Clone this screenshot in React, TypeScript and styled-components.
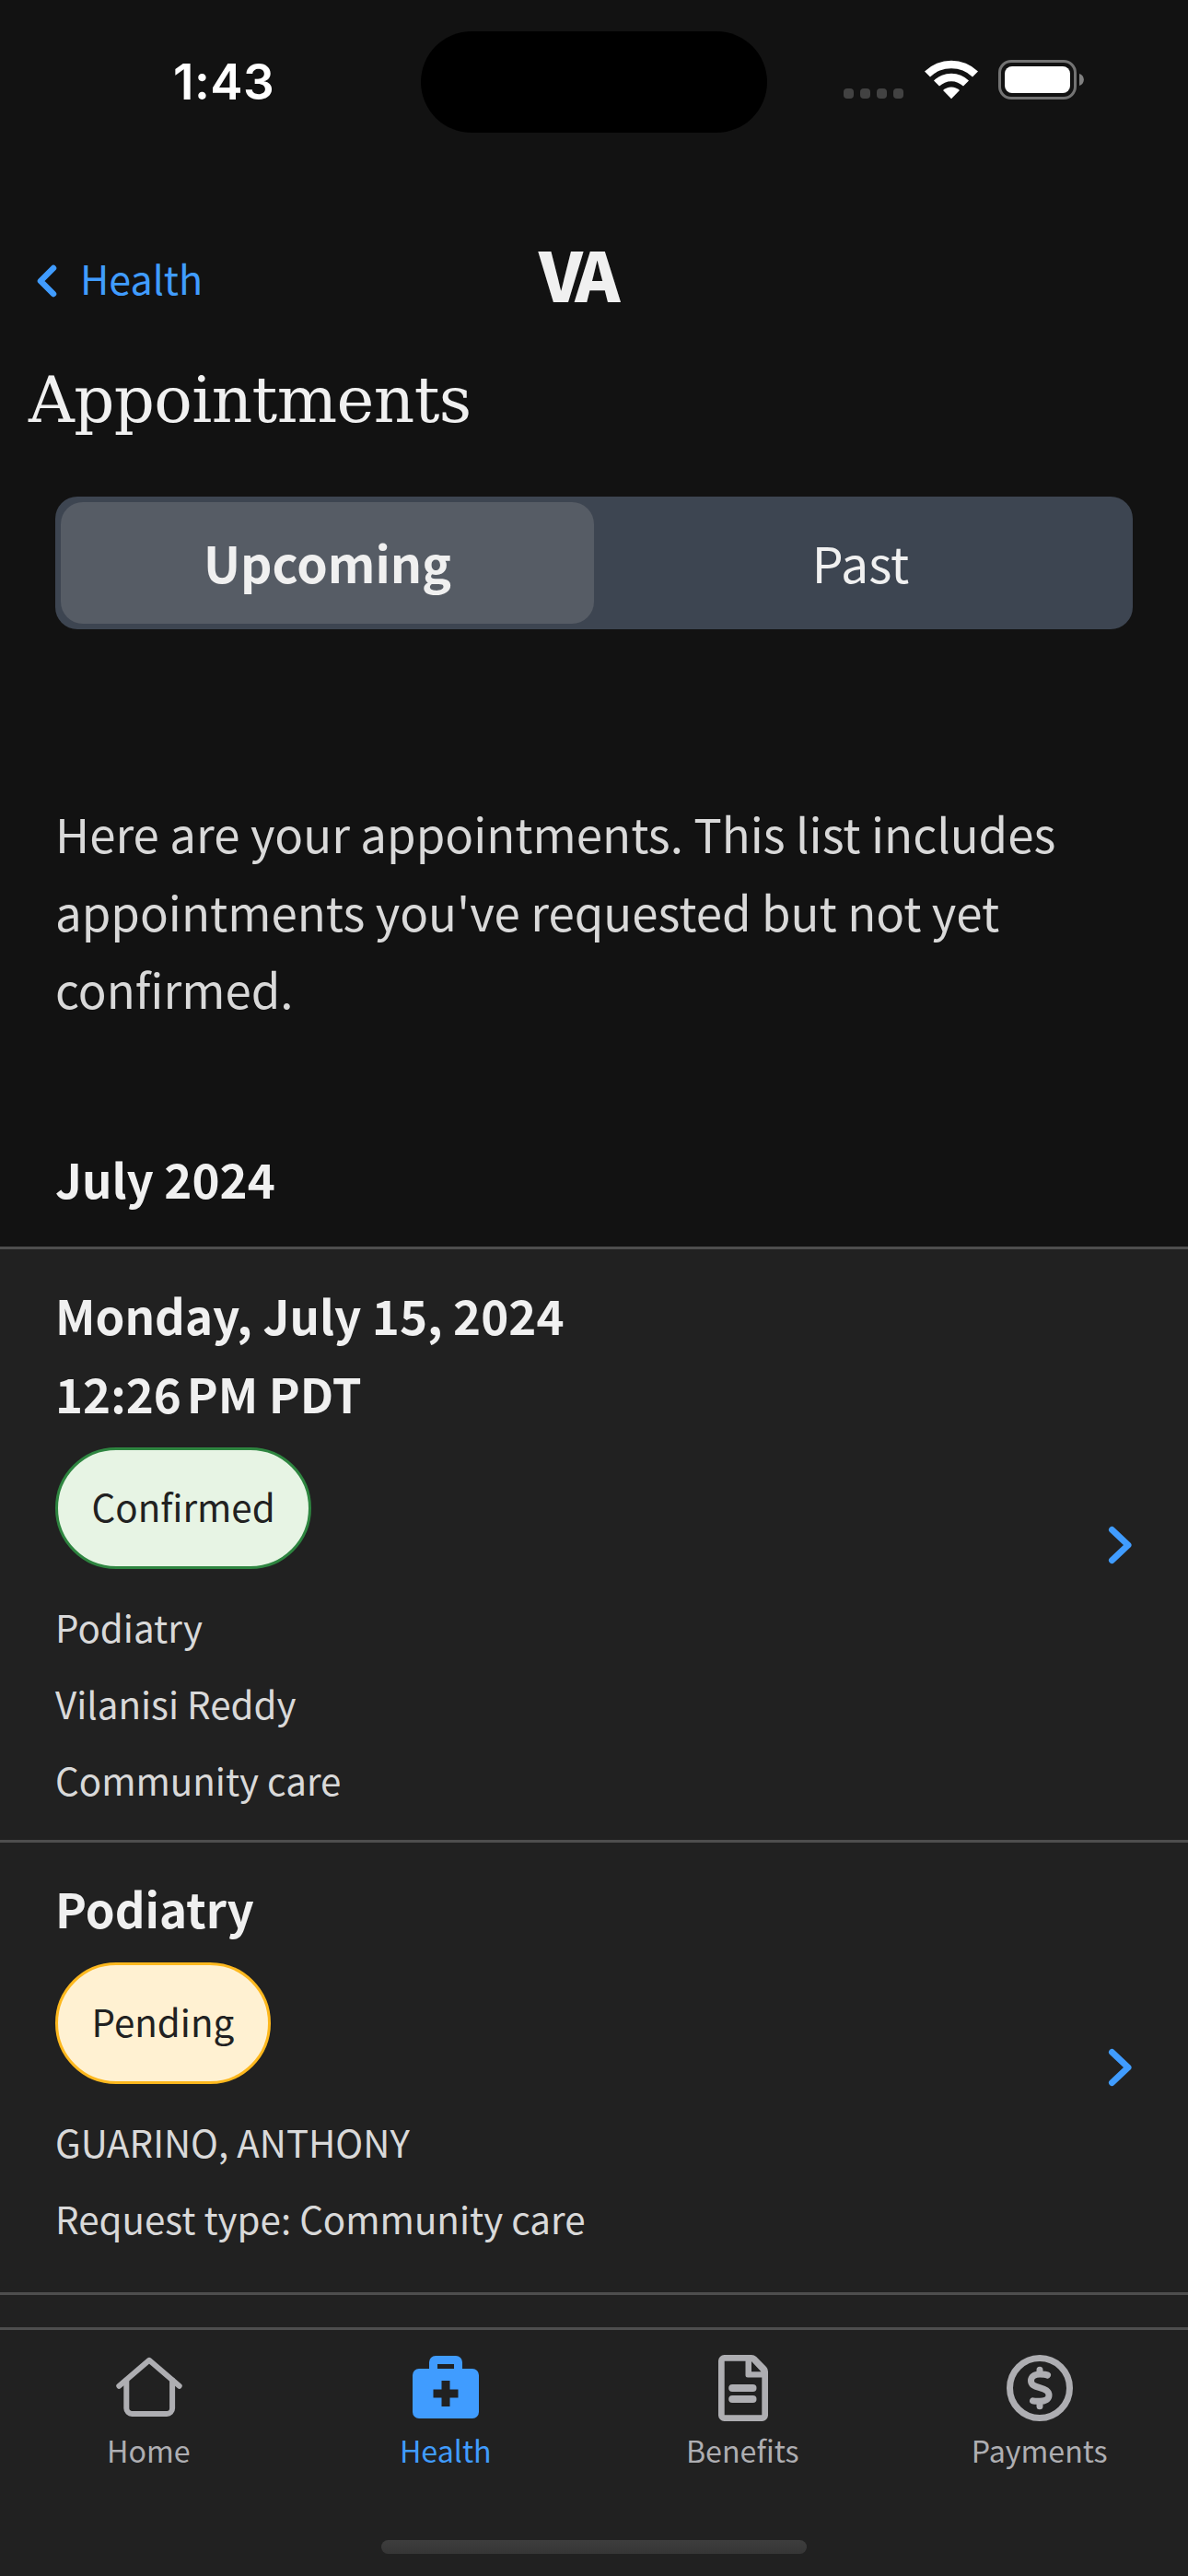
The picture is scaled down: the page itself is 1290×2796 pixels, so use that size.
import React from "react";
import styled, { createGlobalStyle } from "styled-components";

const sans = `"Noto Sans CJK JP", "Noto Sans", sans-serif`;

const GlobalStyle = createGlobalStyle`
  *, *::before, *::after { box-sizing: border-box; }
  body { margin: 0; background: #121212; }
  h1, h2, h3, p, ul { margin: 0; padding: 0; font-weight: inherit; }
  button { border: 0; padding: 0; background: none; font: inherit; color: inherit; }
  svg { display: block; }
`;

const Screen = styled.div`
  display: flex;
  flex-direction: column;
  width: 1290px;
  height: 2796px;
  overflow: hidden;
  background: #121212;
  color: #f0f0f0;
  font-family: ${sans};
`;

const StatusBar = styled.header`
  display: flex;
  height: 177px;
  flex: none;
  padding-top: 34px;
`;

const Clock = styled.div`
  width: 457px;
  padding-left: 188px;
  font: 600 53px/110px Inter, sans-serif;
  letter-spacing: 0.5px;
  color: #fff;
`;

const Island = styled.div`
  width: 376px;
  height: 110px;
  border-radius: 55px;
  background: #000;
`;

const Indicators = styled.div`
  display: flex;
  align-items: flex-end;
  height: 74px;
  padding-left: 83px;
`;

const SignalDots = styled.div`
  display: flex;
  gap: 7px;
  width: 65px;
  margin: 0 23px 1px 0;
`;

const Dot = styled.span`
  width: 11px;
  height: 11px;
  border-radius: 4px;
  background: #424242;
`;

const WifiIcon = styled.svg`
  width: 58px;
  height: 43px;
  margin-right: 22px;
`;

const BatteryIcon = styled.svg`
  width: 94px;
  height: 43px;
`;

const NavBar = styled.nav`
  display: grid;
  grid-template-columns: 585px auto;
  align-items: center;
  height: 208px;
  flex: none;
  padding-top: 40px;
`;

const BackButton = styled.button`
  display: flex;
  align-items: center;
  gap: 24px;
  padding-left: 39px;
  color: #409cff;
  font-size: 43px;
  line-height: 72px;
`;

const Chevron = styled.svg<{ $w: number; $h: number }>`
  width: ${(p) => p.$w}px;
  height: ${(p) => p.$h}px;
  flex: none;
  fill: none;
  stroke: #409cff;
  stroke-linecap: round;
  stroke-linejoin: round;
`;

const BackChevron = styled(Chevron)`
  margin-top: 8px;
`;

const Brand = styled.div`
  padding-bottom: 11px;
  font-size: 74.500px;
  line-height: 90px;
  font-weight: 900;
  letter-spacing: -7px;
`;

const Title = styled.h1`
  height: 154px;
  flex: none;
  padding-left: 31px;
  font-family: "DejaVu Serif", serif;
  font-size: 69px;
  line-height: 99px;
  letter-spacing: -0.600px;
`;

const Segments = styled.div`
  display: grid;
  grid-template-columns: 1fr 1fr;
  height: 144px;
  flex: none;
  margin: 0 60px;
  padding: 6px;
  border-radius: 24px;
  background: #3d4551;
`;

const Segment = styled.button<{ $active?: boolean }>`
  padding-bottom: 4px;
  border-radius: 24px;
  background: ${(p) => (p.$active ? "#565c65" : "transparent")};
  font-size: 53.600px;
  font-weight: ${(p) => (p.$active ? 700 : 400)};
`;

const Intro = styled.p`
  width: 1130px;
  height: 254px;
  margin: 179px 0 0 60px;
  color: #d9d9d9;
  font-size: 51px;
  line-height: 84.500px;
`;

const MonthHeading = styled.h2`
  height: 116px;
  flex: none;
  margin: 121px 0 0 60px;
  font-size: 51px;
  font-weight: 700;
  line-height: 84px;
`;

const List = styled.div`
  flex: 1;
  min-height: 0;
  background: #212121;
  border-top: 3px solid #4e4e4e;
`;

const Card = styled.article<{ $height: number }>`
  display: flex;
  align-items: center;
  justify-content: space-between;
  height: ${(p) => p.$height}px;
  padding: 0 60px;
  border-bottom: 3px solid #4e4e4e;
`;

const CardBody = styled.div`
  display: flex;
  flex-direction: column;
  align-items: flex-start;
  align-self: flex-start;
  padding-top: 29px;
`;

const CardTitle = styled.h3`
  font-size: 51px;
  font-weight: 700;
  line-height: 84.500px;
`;

const Tag = styled.span<{ $tone: "green" | "gold" }>`
  height: 132px;
  margin: 16.500px 0 21px;
  padding: 0 36.500px;
  border: 3px solid ${(p) => (p.$tone === "green" ? "#2e8540" : "#fdb81e")};
  border-radius: 66px;
  background: ${(p) => (p.$tone === "green" ? "#e7f4e4" : "#fff1d2")};
  color: #212121;
  font-size: 40.300px;
  line-height: 121px;
`;

const Detail = styled.p`
  color: #d9d9d9;
  font-size: 40.300px;
  line-height: 83px;
`;

const TabBar = styled.footer`
  display: flex;
  flex-direction: column;
  align-items: center;
  height: 270px;
  flex: none;
  border-top: 3px solid #4e4e4e;
  background: #212121;
`;

const Tabs = styled.div`
  display: grid;
  grid-template-columns: repeat(4, 1fr);
  width: 100%;
  height: 228px;
  padding-top: 27px;
`;

const Tab = styled.button<{ $active?: boolean }>`
  display: flex;
  flex-direction: column;
  align-items: center;
  color: ${(p) => (p.$active ? "#409cff" : "#aeaeb2")};
  font-size: 32.200px;
  line-height: 48px;
`;

const TabIcon = styled.svg`
  width: 72px;
  height: 72px;
  margin: 0 0 7px 1px;
`;

const HomeIndicator = styled.div`
  width: 462px;
  height: 15px;
  border-radius: 8px;
  background: linear-gradient(#3d3d3d, #363636);
`;

const HomeGlyph = () => (
  <TabIcon viewBox="0 0 72 72" fill="none" stroke="currentColor" strokeWidth="6" strokeLinecap="round" strokeLinejoin="round">
    <path d="M3.3 33.7 36 5.8 68.7 33.7" />
    <path d="M11.3 27.500v30.500a6 6 0 0 0 6 6h37.800a6 6 0 0 0 6-6V27.500" />
  </TabIcon>
);

const HealthGlyph = () => (
  <TabIcon viewBox="0 0 72 72" fill="currentColor" fillRule="evenodd">
    <path d="M18 15V8a7 7 0 0 1 7-7h22a7 7 0 0 1 7 7v7h11a7 7 0 0 1 7 7v40a7 7 0 0 1-7 7H7a7 7 0 0 1-7-7V22a7 7 0 0 1 7-7zM27 10v5h18v-5zM31.500 28v9.500h-9v9h9V56h9v-9.500h9v-9h-9V28z" />
  </TabIcon>
);

const BenefitsGlyph = () => (
  <TabIcon viewBox="0 0 72 72" fill="currentColor" fillRule="evenodd">
    <path d="M15.500 0H45q3 0 5.200 2L61 13q2 2 2 5v47.500a6.500 6.500 0 0 1-6.500 6.500h-41A6.500 6.500 0 0 1 9 65.500v-59A6.500 6.500 0 0 1 15.500 0zM15.700 6.700v58.600h40.600V24.500H41a2.500 2.500 0 0 1-2.500-2.500V6.700zM45 7v11.300h10.500z" />
    <rect x="20.200" y="32" width="30.300" height="8" rx="4" />
    <rect x="20.200" y="44" width="30.300" height="8" rx="4" />
  </TabIcon>
);

const PaymentsGlyph = () => (
  <TabIcon viewBox="0 0 72 72" fill="none" stroke="currentColor" strokeWidth="7" strokeLinecap="round">
    <circle cx="36" cy="36" r="32.500" />
    <path d="M44.500 22C42.500 21 40 21 36 21C30 21 26.500 24 26.500 28C26.500 32.500 30 34 36 35.700C42 37.400 46 39 46 44C46 48 42 50.300 36 50.300C33 50.300 31 50.500 28.500 49.800" />
    <path d="M36 16.200v3M36 53v2.800" />
  </TabIcon>
);

const Next = () => (
  <Chevron $w={27} $h={42} viewBox="0 0 27 42" strokeWidth="7">
    <path d="M4.500 4.500 22 21 4.500 37.500" />
  </Chevron>
);

const tabs = [
  { label: "Home", Icon: HomeGlyph },
  { label: "Health", Icon: HealthGlyph, active: true },
  { label: "Benefits", Icon: BenefitsGlyph },
  { label: "Payments", Icon: PaymentsGlyph },
];

export default function App() {
  return (
    <Screen>
      <GlobalStyle />
      <StatusBar>
        <Clock>1:43</Clock>
        <Island />
        <Indicators>
          <SignalDots>
            <Dot />
            <Dot />
            <Dot />
            <Dot />
          </SignalDots>
          <WifiIcon viewBox="0 0 58 43" fill="#fff">
            <path d="M0 12.500A41.500 41.500 0 0 1 58 12.500L52 18.500A33 33 0 0 0 6 18.500Z" />
            <path d="M10 22.500A27 27 0 0 1 48 22.500L42 28.500A18.800 18.800 0 0 0 16 28.500Z" />
            <path d="M20 33A13 13 0 0 1 38 33L29 42.200Z" />
          </WifiIcon>
          <BatteryIcon viewBox="0 0 94 43">
            <rect x="1.500" y="1.500" width="82" height="40" rx="12.500" fill="none" stroke="#737373" strokeWidth="3" />
            <rect x="7" y="7" width="71" height="29" rx="8" fill="#fff" />
            <path d="M88 15c6.500 1.500 6.500 11.500 0 13z" fill="#808080" />
          </BatteryIcon>
        </Indicators>
      </StatusBar>
      <NavBar>
        <BackButton>
          <BackChevron $w={24} $h={36} viewBox="0 0 24 36" strokeWidth="6.500">
            <path d="M19 4 5 18 19 32" />
          </BackChevron>
          Health
        </BackButton>
        <Brand>VA</Brand>
      </NavBar>
      <Title>Appointments</Title>
      <Segments>
        <Segment $active>Upcoming</Segment>
        <Segment>Past</Segment>
      </Segments>
      <Intro>
        Here are your appointments. This list includes appointments you've requested but not yet confirmed.
      </Intro>
      <MonthHeading>July 2024</MonthHeading>
      <List>
        <Card $height={644}>
          <CardBody>
            <CardTitle>Monday, July 15, 2024</CardTitle>
            <CardTitle>12:26{"\u202f"}PM PDT</CardTitle>
            <Tag $tone="green">Confirmed</Tag>
            <Detail>Podiatry</Detail>
            <Detail>Vilanisi Reddy</Detail>
            <Detail>Community care</Detail>
          </CardBody>
          <Next />
        </Card>
        <Card $height={491}>
          <CardBody>
            <CardTitle>Podiatry</CardTitle>
            <Tag $tone="gold">Pending</Tag>
            <Detail>GUARINO, ANTHONY</Detail>
            <Detail>Request type: Community care</Detail>
          </CardBody>
          <Next />
        </Card>
      </List>
      <TabBar>
        <Tabs>
          {tabs.map(({ label, Icon, active }) => (
            <Tab key={label} $active={active}>
              <Icon />
              {label}
            </Tab>
          ))}
        </Tabs>
        <HomeIndicator />
      </TabBar>
    </Screen>
  );
}
